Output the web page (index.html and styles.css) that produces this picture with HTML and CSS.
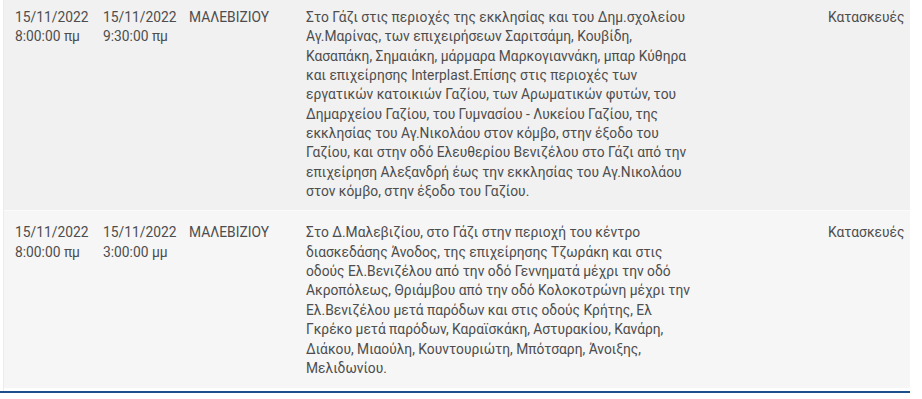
FILE: index.html
```html
<!DOCTYPE html>
<html lang="el">
<head>
<meta charset="utf-8">
<link rel="stylesheet" href="styles.css">
</head>
<body>
<div class="outages">
  <div class="list">
    <div class="row row-first">
      <div class="cell">15/11/2022<br>8:00:00 πμ</div>
      <div class="cell">15/11/2022<br>9:30:00 πμ</div>
      <div class="cell">ΜΑΛΕΒΙΖΙΟΥ</div>
      <div class="cell desc">Στο Γάζι στις περιοχές της εκκλησίας και του Δημ.σχολείου<br>Αγ.Μαρίνας, των επιχειρήσεων Σαριτσάμη, Κουβίδη,<br>Κασαπάκη, Σημαιάκη, μάρμαρα Μαρκογιαννάκη, μπαρ Κύθηρα<br>και επιχείρησης Interplast.Επίσης στις περιοχές των<br>εργατικών κατοικιών Γαζίου, των Αρωματικών φυτών, του<br>Δημαρχείου Γαζίου, του Γυμνασίου - Λυκείου Γαζίου, της<br>εκκλησίας του Αγ.Νικολάου στον κόμβο, στην έξοδο του<br>Γαζίου, και στην οδό Ελευθερίου Βενιζέλου στο Γάζι από την<br>επιχείρηση Αλεξανδρή έως την εκκλησίας του Αγ.Νικολάου<br>στον κόμβο, στην έξοδο του Γαζίου.</div>
      <div class="cell">Κατασκευές</div>
    </div>
    <div class="row row-last">
      <div class="cell">15/11/2022<br>8:00:00 πμ</div>
      <div class="cell">15/11/2022<br>3:00:00 μμ</div>
      <div class="cell">ΜΑΛΕΒΙΖΙΟΥ</div>
      <div class="cell desc">Στο Δ.Μαλεβιζίου, στο Γάζι στην περιοχή του κέντρο<br>διασκεδάσης Άνοδος, της επιχείρησης Τζωράκη και στις<br>οδούς Ελ.Βενιζέλου από την οδό Γεννηματά μέχρι την οδό<br>Ακροπόλεως, Θριάμβου από την οδό Κολοκοτρώνη μέχρι την<br>Ελ.Βενιζέλου μετά παρόδων και στις οδούς Κρήτης, Ελ<br>Γκρέκο μετά παρόδων, Καραϊσκάκη, Αστυρακίου, Κανάρη,<br>Διάκου, Μιαούλη, Κουντουριώτη, Μπότσαρη, Άνοιξης,<br>Μελιδωνίου.</div>
      <div class="cell">Κατασκευές</div>
    </div>
  </div>
  <div class="rule"></div>
</div>
</body>
</html>
```

FILE: styles.css
```css
html, body {
  margin: 0;
  padding: 0;
  background: #ffffff;
}

body {
  font-family: Roboto, "Noto Sans", sans-serif;
  font-size: 13.8px;
  line-height: 19.35px;
  color: #4d4d4d;
}

.outages {
  width: 910px;
}

.list {
  margin-left: 3px;
  border-left: 1px solid #ececec;
}

.row {
  display: grid;
  grid-template-columns: 88px 86px 117px 522px 1fr;
  padding: 12px 0 10px 11px;
  background: #f1f1f1;
  border-bottom: 1px solid #fbfbfb;
}

.row-first {
  padding-top: 8px;
  padding-bottom: 9px;
}

.row-last {
  background: #f6f6f6;
  padding-top: 12px;
  padding-bottom: 10px;
  border-bottom: 3px solid #ffffff;
}

.cell {
  white-space: nowrap;
}

.rule {
  height: 2px;
  background: #1d4f8c;
}
```
